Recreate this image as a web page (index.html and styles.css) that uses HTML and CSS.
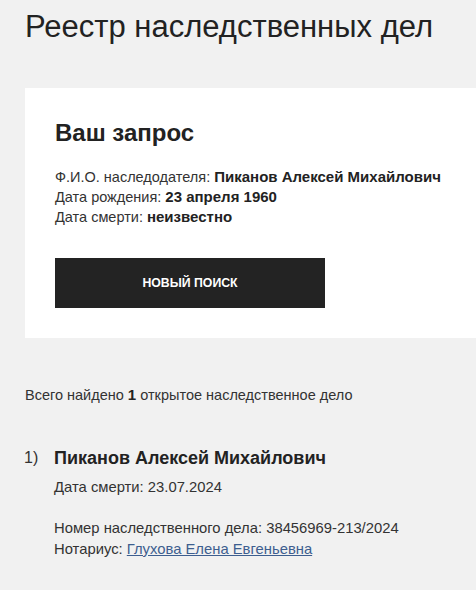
FILE: index.html
```html
<!DOCTYPE html>
<html lang="ru">
<head>
<meta charset="utf-8">
<link rel="stylesheet" href="styles.css">
</head>
<body>
<div class="page">
  <h1 class="title">Реестр наследственных дел</h1>
  <section class="card">
    <h2 class="card-title">Ваш запрос</h2>
    <div class="query">
      <div>Ф.И.О. наследодателя: <b>Пиканов Алексей Михайлович</b></div>
      <div>Дата рождения: <b>23 апреля 1960</b></div>
      <div>Дата смерти: <b>неизвестно</b></div>
    </div>
    <button class="btn">НОВЫЙ ПОИСК</button>
  </section>
  <p class="total">Всего найдено <b>1</b> открытое наследственное дело</p>
  <div class="result">
    <div class="num">1)</div>
    <div class="body">
      <div class="name">Пиканов Алексей Михайлович</div>
      <div class="death">Дата смерти: 23.07.2024</div>
      <div class="meta">
        <div>Номер наследственного дела: 38456969-213/2024</div>
        <div>Нотариус: <a href="#" class="link">Глухова Елена Евгеньевна</a></div>
      </div>
    </div>
  </div>
</div>
</body>
</html>
```
FILE: styles.css
```css
html, body {
  margin: 0;
  padding: 0;
  background: #f1f1f1;
  overflow: hidden;
}
.page {
  padding: 0 0 0 25px;
  font-family: "Liberation Sans", Arial, sans-serif;
  color: #333;
  font-size: 14.5px;
  overflow: hidden;
}
.title {
  margin: 0;
  padding-top: 10px;
  font-size: 31px;
  font-weight: normal;
  color: #222;
  line-height: 34px;
  height: 78px;
}
.card {
  background: #fff;
  margin-right: -30px;
  padding: 32px 30px 30px 30px;
  height: 188px;
}
.card-title {
  margin: 0;
  font-size: 24px;
  line-height: 26px;
  font-weight: bold;
  color: #222;
}
.query {
  margin-top: 21px;
  line-height: 20px;
}
.query b, .total b {
  color: #222;
  font-size: 15px;
}
.btn {
  display: block;
  margin-top: 31px;
  width: 270px;
  height: 50px;
  background: #232323;
  color: #fff;
  border: 0;
  font-family: inherit;
  font-weight: bold;
  font-size: 12.3px;
  padding: 0;
}
.total {
  margin: 47px 0 0;
  line-height: 20px;
}
.result {
  display: flex;
  margin-top: 41px;
  font-size: 14.8px;
}
.num {
  width: 30px;
  font-size: 16px;
  line-height: 24px;
  margin-left: -1px;
}
.name {
  font-size: 18px;
  font-weight: bold;
  color: #222;
  line-height: 24px;
}
.death {
  margin-top: 7px;
  line-height: 20px;
}
.meta {
  margin-top: 21px;
  line-height: 21px;
}
.link {
  color: #3d5e8f;
}
```
